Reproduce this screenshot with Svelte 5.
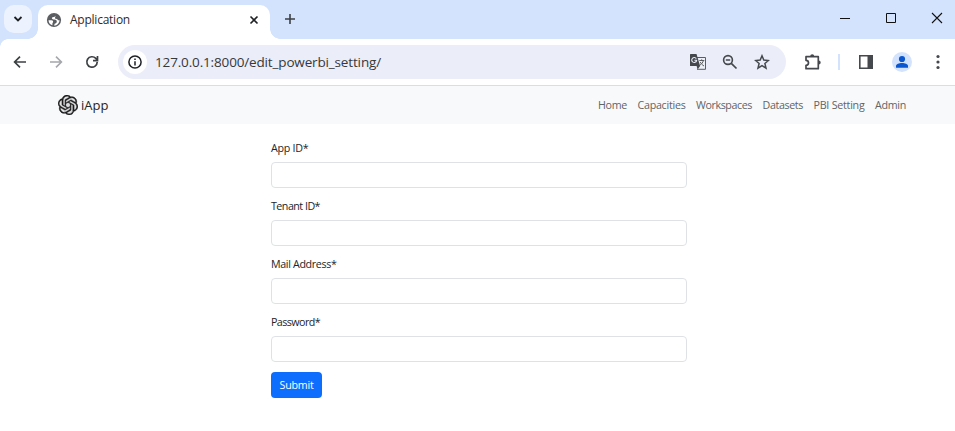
<script>
  const links = [
    { label: 'Home', width: 29 },
    { label: 'Capacities', width: 48 },
    { label: 'Workspaces', width: 56 },
    { label: 'Datasets', width: 40.5 },
    { label: 'PBI Setting', width: 51 },
    { label: 'Admin', width: 31 }
  ];
  const fields = [
    { id: 'app', label: 'App ID*', type: 'text', width: 37.5 },
    { id: 'tenant', label: 'Tenant ID*', type: 'text', width: 49 },
    { id: 'mail', label: 'Mail Address*', type: 'email', width: 65.5 },
    { id: 'password', label: 'Password*', type: 'password', width: 49 }
  ];

  // Spreads or tightens the letters so that a label fills its width.
  function fit(node, width) {
    const natural = node.getBoundingClientRect().width;
    node.style.letterSpacing = `${(width - natural) / node.textContent.length}px`;
  }
</script>

<div class="window">
  <div class="tabs">
    <button class="search" aria-label="Search tabs">
      <svg width="10" height="8" viewBox="0 0 10 8"><path d="M1.500 2 5 5.500 8.500 2" fill="none" stroke="#1f2024" stroke-width="1.800" /></svg>
    </button>
    <div class="tab">
      <svg class="globe" width="18" height="18" viewBox="0 0 18 18">
        <circle cx="9" cy="9" r="7.100" fill="#5a5d61" />
        <path d="M10.600 3.300c.3 1.700-.5 2.500-1.900 2.600-1.600.1-2 .8-1.700 1.700.3.800 1 1 2.300 1 1.700 0 2.400.7 2.500 2 0 1.500-1 1.800-2.200 2.200l-.4 1.900A5.600 5.600 0 0 0 14.600 9.300c-1 .2-1.500-.1-2-.8-.5-.8-1.200-.8-2.300-.9M3.500 9.300h3c1.300 0 1.700.8 1.600 1.700-.1.800-.7.900-.7 1.700v1.600A5.600 5.600 0 0 1 3.500 9.300z" fill="#fff" />
        <path d="M10 7.400c0-1 .5-1.300 1.500-1.400 1.200-.2 1.500-.8 1.500-1.600l1.600 1.500.8 2.400c-1 .9-2 .8-2.700 0-.6-.7-1.600-.9-2.700-.9z" fill="#5a5d61" />
      </svg>
      <span class="title"><span use:fit={60}>Application</span></span>
      <svg class="close" width="10" height="10" viewBox="0 0 10 10"><path d="m1.500 1.500 7 7m0-7-7 7" stroke="#202124" stroke-width="1.600" /></svg>
    </div>
    <svg class="plus" width="12" height="12" viewBox="0 0 12 12"><path d="M6 1v10M1 6h10" stroke="#3c4043" stroke-width="1.600" /></svg>
    <div class="controls">
      <svg width="12" height="12" viewBox="0 0 12 12"><path d="M1 6.500h10" stroke="#111" /></svg>
      <svg width="12" height="12" viewBox="0 0 12 12"><path d="M1.500 1.500h9v9h-9z" fill="none" stroke="#111" /></svg>
      <svg width="12" height="12" viewBox="0 0 12 12"><path d="m1 1 10 10m0-10L1 11" stroke="#111" stroke-width="1.100" /></svg>
    </div>
  </div>

  <div class="toolbar">
    <svg class="nav" width="14" height="14" viewBox="0 0 14 14"><path d="M13 7H2M7 1.600 1.600 7 7 12.400" fill="none" stroke="#3c4043" stroke-width="1.700" /></svg>
    <svg class="nav" width="14" height="14" viewBox="0 0 14 14"><path d="M1 7h11M7 1.600 12.400 7 7 12.400" fill="none" stroke="#a5a7aa" stroke-width="1.600" /></svg>
    <svg class="nav" width="14" height="14" viewBox="0 0 14 14"><path d="M12.200 7A5.200 5.200 0 1 1 10.800 3.400L12.300 5M12.500 1v4.600H8" fill="none" stroke="#3c4043" stroke-width="1.700" /></svg>
    <div class="address">
      <span class="info">
        <svg width="14" height="14" viewBox="0 0 14 14"><circle cx="7" cy="7" r="6.100" fill="none" stroke="#1f2024" stroke-width="1.500" /><path d="M7 6.200v4.200M7 3.600v1.500" stroke="#1f2024" stroke-width="1.500" /></svg>
      </span>
      <span class="url"><span use:fit={226}>127.0.0.1:8000/edit_powerbi_setting/</span></span>
      <svg class="translate" width="18" height="18" viewBox="0 0 18 18">
        <path d="M8 4.500h8.500v11.800H8" fill="#eef0f8" stroke="#5b5d61" />
        <path d="M1.500 1h6l3.600 12H1.500Q1 13 1 12.500v-11Q1 1 1.500 1z" fill="#45484c" />
        <path d="m7.600 13 3.500 0-2.500 3.500z" fill="#45484c" />
        <path d="M7.300 5.600A2.500 2.500 0 1 0 7.600 7.800V7.300H5.400" fill="none" stroke="#e9edf8" stroke-width="1.100" />
        <path d="M10.300 7.500h5M12.700 6.300v1.200M14.400 7.500c-.5 2-1.800 3.500-3.300 4.500m.2-3c.7 1.500 2 3 3.700 4" fill="none" stroke="#5b5d61" />
      </svg>
      <svg class="zoom" width="16" height="16" viewBox="0 0 16 16"><circle cx="6" cy="6" r="4.400" fill="none" stroke="#45484c" stroke-width="1.600" /><path d="m9.300 9.300 5.200 5.200M3.800 6h4.400" stroke="#45484c" stroke-width="1.700" /></svg>
      <svg class="star" width="16" height="16" viewBox="0 0 16 16"><path d="m8 1.800 1.800 4.300 4.600.4-3.500 3 1.100 4.600-4-2.500-4 2.500 1.100-4.600-3.500-3 4.600-.4z" fill="none" stroke="#45484c" stroke-width="1.500" /></svg>
    </div>
    <svg class="puzzle" width="18" height="18" viewBox="0 0 18 18"><path d="M2 3.700h12.300v12H2v-3.400a2.400 2.400 0 0 0 0-5z" fill="none" stroke="#45484c" stroke-width="1.700" stroke-linejoin="round" /><path d="M6.200 3.300a2 2 0 0 1 4 0zM14.700 7.600a2 2 0 0 1 0 4z" fill="#45484c" /></svg>
    <i class="divider"></i>
    <svg class="panel" width="16" height="16" viewBox="0 0 16 16"><path d="M1.800 1.800h12.400v12.400H1.800z" fill="none" stroke="#45484c" stroke-width="1.600" /><path d="M9.500 1.500H14v13H9.500z" fill="#45484c" /></svg>
    <svg class="person" width="20" height="20" viewBox="0 0 20 20"><circle cx="10" cy="10" r="10" fill="#d3e3fd" /><circle cx="10" cy="7" r="3.100" fill="#0b57d0" /><path d="M4 15.700v-1.600c0-2 3-3 6-3s6 1 6 3v1.600z" fill="#0b57d0" /></svg>
    <svg class="dots" width="4" height="16" viewBox="0 0 4 16"><g fill="#45484c"><circle cx="2" cy="2.500" r="1.600" /><circle cx="2" cy="8" r="1.600" /><circle cx="2" cy="13.500" r="1.600" /></g></svg>
  </div>

  <nav class="navbar">
    <div class="brand">
      <svg width="20" height="20" viewBox="0 0 24 24"><circle cx="12" cy="12" r="9.500" fill="#dcdddf" /><path fill="#1d1d1f" stroke="#1d1d1f" stroke-width=".4" d="M22.2819 9.8211a5.9847 5.9847 0 0 0-.5157-4.9108 6.0462 6.0462 0 0 0-6.5098-2.9A6.0651 6.0651 0 0 0 4.9807 4.1818a5.9847 5.9847 0 0 0-3.9977 2.9 6.0462 6.0462 0 0 0 .7427 7.0966 5.98 5.98 0 0 0 .511 4.9107 6.051 6.051 0 0 0 6.5146 2.9001A5.9847 5.9847 0 0 0 13.2599 24a6.0557 6.0557 0 0 0 5.7718-4.2058 5.9894 5.9894 0 0 0 3.9977-2.9001 6.0557 6.0557 0 0 0-.7475-7.0729zm-9.022 12.6081a4.4755 4.4755 0 0 1-2.8764-1.0408l.1419-.0804 4.7783-2.7582a.7948.7948 0 0 0 .3927-.6813v-6.7369l2.02 1.1686a.071.071 0 0 1 .038.052v5.5826a4.504 4.504 0 0 1-4.4945 4.4944zm-9.6607-4.1254a4.4708 4.4708 0 0 1-.5346-3.0137l.142.0852 4.783 2.7582a.7712.7712 0 0 0 .7806 0l5.8428-3.3685v2.3324a.0804.0804 0 0 1-.0332.0615L9.74 19.9502a4.4992 4.4992 0 0 1-6.1408-1.6464zM2.3408 7.8956a4.485 4.485 0 0 1 2.3655-1.9728V11.6a.7664.7664 0 0 0 .3879.6765l5.8144 3.3543-2.0201 1.1685a.0757.0757 0 0 1-.071 0l-4.8303-2.7865A4.504 4.504 0 0 1 2.3408 7.872zm16.5963 3.8558L13.1038 8.364 15.1192 7.2a.0757.0757 0 0 1 .071 0l4.8303 2.7913a4.4944 4.4944 0 0 1-.6765 8.1042v-5.6772a.79.79 0 0 0-.407-.667zm2.0107-3.0231l-.142-.0852-4.7735-2.7818a.7759.7759 0 0 0-.7854 0L9.409 9.2297V6.8974a.0662.0662 0 0 1 .0284-.0615l4.8303-2.7866a4.4992 4.4992 0 0 1 6.6802 4.66zM8.3065 12.863l-2.02-1.1638a.0804.0804 0 0 1-.038-.0567V6.0742a4.4992 4.4992 0 0 1 7.3757-3.4537l-.142.0805L8.704 5.459a.7948.7948 0 0 0-.3927.6813zm1.0976-2.3654l2.602-1.4998 2.6069 1.4998v2.9994l-2.5974 1.4997-2.6067-1.4997Z" /></svg>
      <span use:fit={27.5}>iApp</span>
    </div>
    <div class="links">
      {#each links as link}
        <span class="slot" style:width="{link.width}px"><span use:fit={link.width}>{link.label}</span></span>
      {/each}
    </div>
  </nav>

  <form>
    {#each fields as field}
      <label for={field.id}><span use:fit={field.width}>{field.label}</span></label>
      <input id={field.id} type={field.type} />
    {/each}
    <button class="submit" type="button"><span use:fit={34}>Submit</span></button>
  </form>
</div>

<style>
  :global(body) { margin: 0; background: #fff; }
  .window {
    width: 955px; height: 431px; overflow: hidden; background: #fff;
    font-family: "Open Sans", "Noto Sans", sans-serif; color: #212529;
  }
  svg { display: block; flex: none; }
  span { white-space: nowrap; }

  .tabs { display: flex; height: 39px; background: #d3e3fd; box-sizing: border-box; padding: 5px 12px 0 4px; align-items: flex-start; }
  .search {
    width: 28px; height: 28px; border: 0; border-radius: 10px; background: #ecf3fe; padding: 0;
    display: flex; align-items: center; justify-content: center;
  }
  .tab {
    position: relative; display: flex; align-items: center; box-sizing: border-box;
    width: 232px; height: 34px; margin-left: 6px; padding: 0 11px 5px 7px;
    background: #fff; border-radius: 10px 10px 0 0;
  }
  .tab::before, .tab::after { content: ""; position: absolute; bottom: 0; width: 10px; height: 10px; }
  .tab::before { left: -10px; background: radial-gradient(circle at 0 0, transparent 9.500px, #fff 10px); }
  .tab::after { right: -10px; background: radial-gradient(circle at 100% 0, transparent 9.500px, #fff 10px); }
  .title { flex: 1; margin-left: 7px; font-size: 12px; line-height: 16px; padding-top: 1px; color: #2a2c2f; }
  .plus { margin: 8px 0 0 14px; }
  .controls { display: flex; gap: 34px; margin: 7px 0 0 auto; }

  .toolbar {
    display: flex; align-items: center; height: 46px; border-bottom: 1px solid #d9dee6; padding-left: 13px;
    background: radial-gradient(circle at 8px 8px, #fff 7.500px, #d3e3fd 8px) 0 0 / 8px 8px no-repeat;
  }
  .nav { margin-right: 22px; }
  .address {
    display: flex; align-items: center; width: 668px; height: 34px; margin-left: -3px;
    border-radius: 17px; background: #ebedf8; box-sizing: border-box; padding-left: 5px;
  }
  .info { display: flex; align-items: center; justify-content: center; width: 24px; height: 24px; border-radius: 50%; background: #fff; }
  .url { flex: 1; margin-left: 8px; font-size: 13.500px; line-height: 20px; color: #36383c; }
  .zoom { margin-left: 15px; }
  .star { margin: 0 16px 0 16px; }
  .puzzle { margin-left: 18px; }
  .divider { width: 2px; height: 16px; margin-left: 16px; background: #d3e3fd; }
  .panel { margin-left: 18px; }
  .person { margin-left: 18px; }
  .dots { margin-left: 24px; }

  .navbar { display: flex; align-items: center; justify-content: space-between; height: 38px; padding: 0 49px 0 58px; background: #f8f9fa; }
  .brand { display: flex; align-items: center; gap: 3px; font-size: 13px; }
  .links { display: flex; gap: 10.500px; font-size: 10.700px; color: #626466; padding-bottom: 1px; }
  .slot { display: block; }

  form { width: 416px; margin: 16px 0 0 271px; font-size: 10.700px; }
  label { display: block; height: 16px; line-height: 16px; margin-bottom: 6px; }
  input { display: block; box-sizing: border-box; width: 416px; height: 26px; margin: 0 0 10px; padding: 0 8px; border: 1px solid #dee2e6; border-radius: 4px; background: #fff; }
  .submit {
    display: flex; align-items: center; justify-content: center; width: 51px; height: 26px; padding: 0 0 1px;
    border: 0; border-radius: 4px; background: #0d6efd; color: #fff; font: 10.700px "Open Sans", "Noto Sans", sans-serif;
  }
</style>
